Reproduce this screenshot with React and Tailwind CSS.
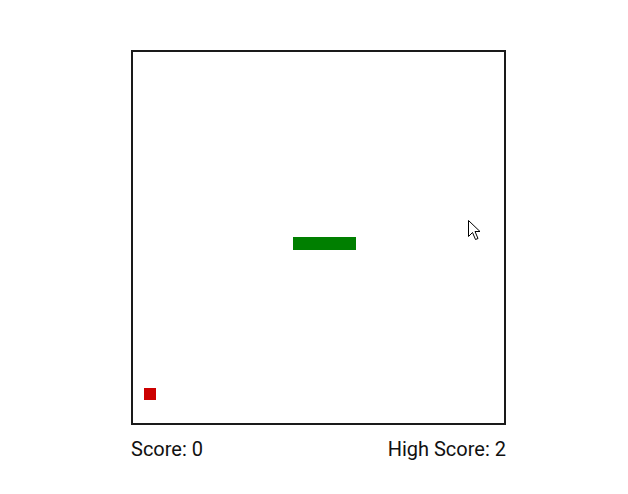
export default function App() {
  return (
    <div
      className="relative h-[494px] w-[628px] bg-white pt-[50px] pl-[131px]"
      style={{ fontFamily: "Roboto, 'Liberation Sans', sans-serif" }}
    >
      <div className="flex w-[375px] flex-col">
        <div className="relative h-[375px] w-[375px] border-2 border-[#1a1a1a]">
          {/* snake */}
          <div className="absolute left-[160px] top-[185px] h-[13px] w-[63px] bg-[#007f00]" />
          {/* food */}
          <div className="absolute left-[11px] top-[336px] h-[12px] w-[12px] bg-[#cc0000]" />
        </div>
        <div className="mt-[11px] flex justify-between text-[20px] leading-[26px] text-[#111]">
          <span>Score: 0</span>
          <span>High Score: 2</span>
        </div>
      </div>
      {/* mouse cursor */}
      <svg
        className="absolute left-[468px] top-[220px]"
        width="13"
        height="21"
        viewBox="0 0 13 21"
      >
        <path
          d="M0.5 0.5 L0.5 16.5 L4.5 12.5 L7.5 19.5 L10 18.5 L7 11.5 L12 11.5 Z"
          fill="#fff"
          stroke="#000"
          strokeWidth="1"
        />
      </svg>
    </div>
  );
}
